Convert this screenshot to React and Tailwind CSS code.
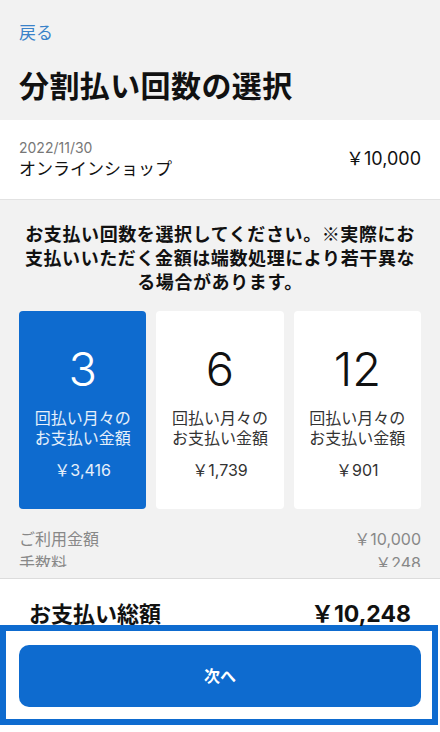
import React from 'react';

const font = { fontFamily: 'Inter, "Noto Sans CJK JP", "Noto Sans", sans-serif' };
const cjk = { fontFamily: '"Noto Sans CJK JP", sans-serif' };

const plans = [
  { count: 3, amount: '￥3,416', selected: true },
  { count: 6, amount: '￥1,739' },
  { count: 12, amount: '￥901' },
];

export default function App() {
  return (
    <div className="h-[732px] w-[440px] flex flex-col bg-[#f2f2f2] overflow-hidden text-[#111]" style={font}>
      {/* Header */}
      <header className="px-[19px] pt-[20px]">
        <button className="text-[17px] leading-[26px] text-[#3a82c9]">戻る</button>
        <h1 className="mt-[20px] text-[30px] leading-[40px] font-bold tracking-[0.4px]">分割払い回数の選択</h1>
      </header>

      {/* Order summary */}
      <div className="mt-[14px] h-[80px] shrink-0 bg-white border-b border-[#e2e2e2] flex items-center justify-between px-[19px]">
        <div>
          <p className="text-[14px] leading-[18px] text-[#777]">2022/11/30</p>
          <p className="text-[17px] leading-[24px]">オンラインショップ</p>
        </div>
        <p className="text-[18px] leading-[24px] mt-[-2px]">￥10,000</p>
      </div>

      {/* Scroll area */}
      <main className="flex-1 overflow-hidden px-[19px]">
        <p className="pt-[21px] text-center text-[18px] leading-[24px] font-bold tracking-[0.6px]" style={cjk}>
          お支払い回数を選択してください。※実際にお支払いいただく金額は端数処理により若干異なる場合があります。
        </p>

        <div className="mt-[18px] grid grid-cols-3 gap-[10px]">
          {plans.map((p) => (
            <div
              key={p.count}
              className={
                'h-[198px] rounded-[4px] flex flex-col items-center pt-[30px] ' +
                (p.selected ? 'bg-[#0e6bcf] text-white' : 'bg-white text-[#111]')
              }
            >
              <span className="text-[47px] leading-[56px] font-light">{p.count}</span>
              <div className={'mt-[11px] text-[16px] text-center ' + (p.selected ? 'text-white/90' : 'text-[#333]')}>
                <p className="leading-[20px]">回払い月々の</p>
                <p className="leading-[20px]">お支払い金額</p>
              </div>
              <span className={'mt-[12px] text-[16px] leading-[20px] ' + (p.selected ? 'text-white/90' : 'text-[#333]')}>
                {p.amount}
              </span>
            </div>
          ))}
        </div>

        <div className="mt-[18px] text-[16px] text-[#888]">
          <div className="flex justify-between leading-[24px]">
            <span>ご利用金額</span>
            <span>￥10,000</span>
          </div>
          <div className="flex justify-between leading-[24px]">
            <span>手数料</span>
            <span>￥248</span>
          </div>
        </div>
      </main>
      <div className="h-[11px] shrink-0" />

      {/* Footer */}
      <footer className="h-[154px] shrink-0 bg-white border-t border-[#dcdcdc]">
        <div className="flex justify-between items-end h-[46px] px-[29px] font-bold">
          <span className="text-[22px] leading-[28px] mb-[-3px]">お支払い総額</span>
          <span className="text-[23px] leading-[28px] mb-[-3px]">￥10,248</span>
        </div>
        <div className="w-[438px] border-[6px] border-[#0e6bcf] pt-[14px] pb-[12px] pl-[13px] pr-[12px]">
          <button className="w-[402px] h-[62px] rounded-[10px] bg-[#0e6bcf] text-white text-[16px] font-bold">
            次へ
          </button>
        </div>
      </footer>
    </div>
  );
}
